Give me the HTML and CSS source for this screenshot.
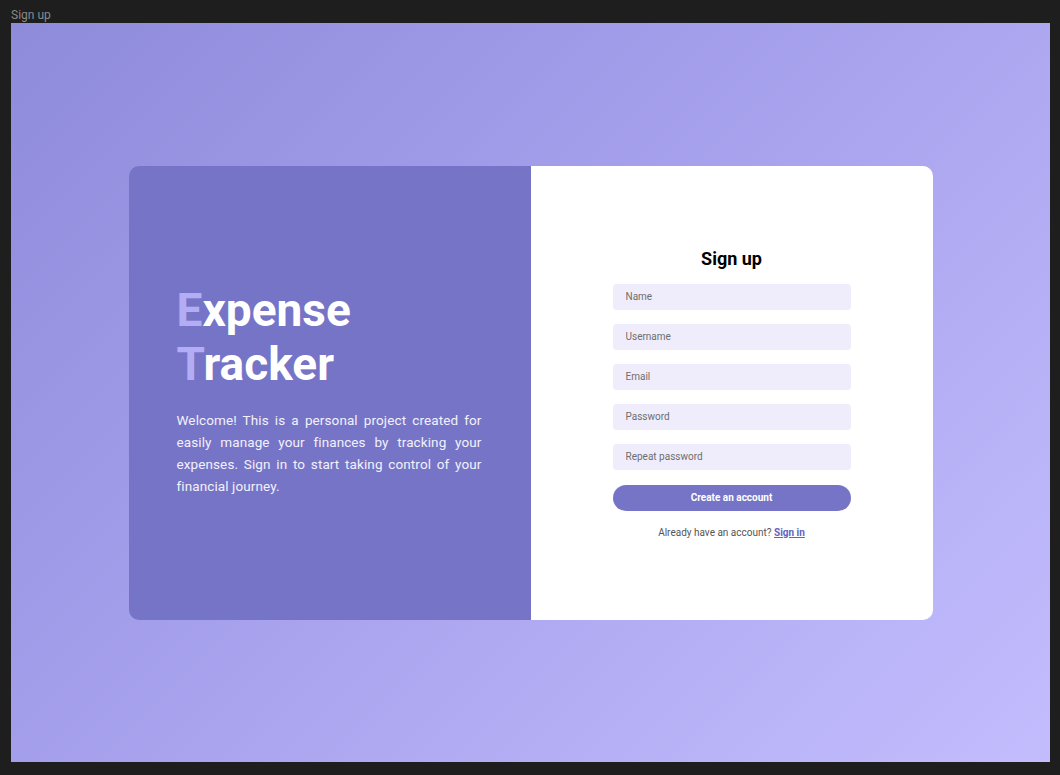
FILE: index.html
```html
<!DOCTYPE html>
<html lang="en">
<head>
  <meta charset="UTF-8" />
  <title>Sign up</title>
  <link rel="stylesheet" href="styles.css">
</head>
<body>
  <div class="frame-label">Sign up</div>
  <div class="frame">
    <div class="card">
      <div class="intro">
        <h1><span class="first">E</span>xpense<br><span class="first">T</span>racker</h1>
        <p>Welcome! This is a personal project created for easily manage your finances by tracking your expenses. Sign in to start taking control of your financial journey.</p>
      </div>

      <div class="form-side">
        <form class="signup">
          <h2>Sign up</h2>
          <input type="text" placeholder="Name" />
          <input type="text" placeholder="Username" />
          <input type="email" placeholder="Email" />
          <input type="password" placeholder="Password" />
          <input type="password" placeholder="Repeat password" />
          <button type="button">Create an account</button>
          <p class="switch">Already have an account? <a href="#">Sign in</a></p>
        </form>
      </div>
    </div>
  </div>
</body>
</html>
```

FILE: styles.css
```css
:root {
  --accent: #7674c6;
  --accent-light: #b3adf5;
  --field: #efedfb;
  --radius: 10px;
}

* {
  box-sizing: border-box;
  margin: 0;
  padding: 0;
  font-family: Roboto, 'Liberation Sans', sans-serif;
}

body {
  background-color: #1e1e1e;
  width: 1060px;
  height: 775px;
  overflow: hidden;
}

.frame-label {
  height: 23px;
  padding: 8px 0 0 11px;
  font-size: 12px;
  line-height: 14px;
  color: #8a8a8a;
}

.frame {
  margin-left: 11px;
  width: 1039px;
  height: 739px;
  display: flex;
  align-items: center;
  justify-content: center;
  background: linear-gradient(135deg, #8e8bdb 0%, #a9a3ee 50%, #c3bdfe 100%);
}

.card {
  width: 804px;
  height: 454px;
  display: flex;
  border-radius: var(--radius);
  overflow: hidden;
}

.intro {
  width: 402px;
  background-color: var(--accent);
  padding: 0 49px 5px 48px;
  display: flex;
  flex-direction: column;
  justify-content: center;
  color: #fff;
}

.intro h1 {
  font-size: 46px;
  font-weight: 700;
  line-height: 54px;
  margin-bottom: 18px;
}

.intro .first {
  color: var(--accent-light);
}

.intro p {
  font-size: 13.5px;
  line-height: 22px;
  text-align: justify;
  color: #f2f1fb;
  letter-spacing: 0.1px;
}

.form-side {
  width: 402px;
  background-color: #fff;
  display: flex;
  align-items: center;
  justify-content: center;
}

.signup {
  width: 238px;
  display: flex;
  flex-direction: column;
  gap: 14px;
}

.signup h2 {
  text-align: center;
  font-size: 18px;
  font-weight: 700;
  color: #000;
  line-height: 22px;
}

.signup input {
  height: 26px;
  border: none;
  border-radius: 4px;
  background-color: var(--field);
  padding: 0 13px;
  font-size: 10px;
  color: #333;
}

.signup input::placeholder {
  color: #6e6e6e;
}

.signup input:focus {
  outline: none;
}

.signup button {
  height: 26px;
  margin-top: 1px;
  border: none;
  border-radius: 13px;
  background-color: var(--accent);
  color: #fff;
  font-size: 10px;
  font-weight: 700;
  cursor: pointer;
}

.switch {
  text-align: center;
  font-size: 10px;
  color: #555;
  margin-top: 2px;
}

.switch a {
  color: #6562c2;
  font-weight: 700;
}
```
